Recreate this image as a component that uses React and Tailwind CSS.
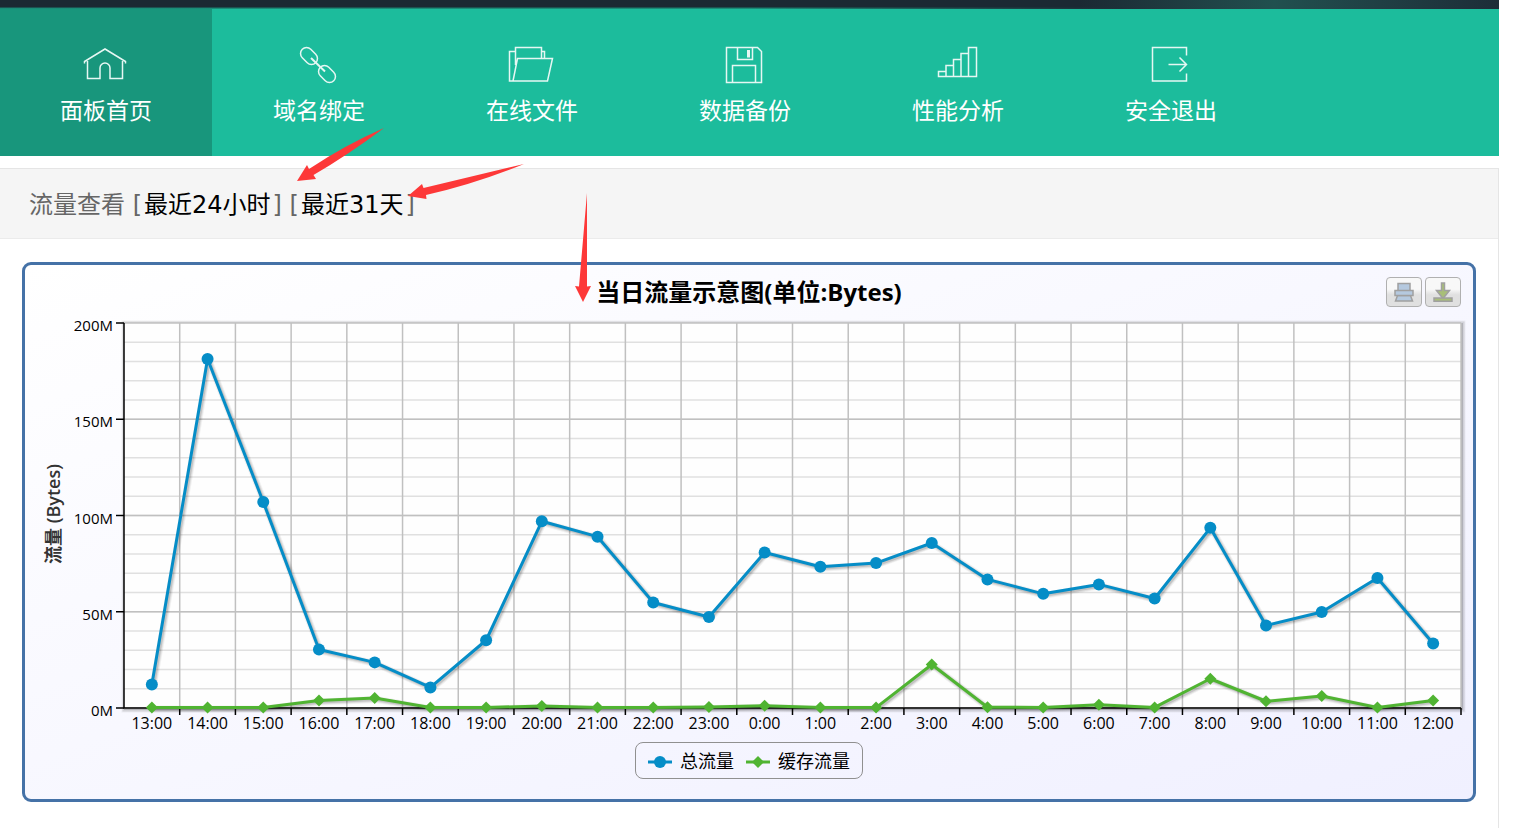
const navItems = [
  { label: '面板首页', icon: HomeIcon, active: true },
  { label: '域名绑定', icon: ChainIcon },
  { label: '在线文件', icon: FolderIcon },
  { label: '数据备份', icon: FloppyIcon },
  { label: '性能分析', icon: BarsIcon },
  { label: '安全退出', icon: ExitIcon },
]

const hours = [
  '13:00', '14:00', '15:00', '16:00', '17:00', '18:00', '19:00', '20:00',
  '21:00', '22:00', '23:00', '0:00', '1:00', '2:00', '3:00', '4:00',
  '5:00', '6:00', '7:00', '8:00', '9:00', '10:00', '11:00', '12:00',
]

const total = [
  12.2, 181.3, 107, 30.4, 23.7, 10.7, 35.2, 97, 89, 54.8, 47.3, 80.8,
  73.4, 75.3, 85.7, 66.8, 59.3, 64.2, 56.9, 93.6, 42.9, 49.9, 67.5, 33.5,
]

const cached = [
  0.3, 0.3, 0.3, 3.9, 5.2, 0.3, 0.3, 1, 0.3, 0.3, 0.5, 1.2,
  0.3, 0.2, 22.6, 0.4, 0.3, 1.7, 0.3, 15.2, 3.5, 6.2, 0.3, 3.9,
]

const plot = { left: 99, right: 1436, top: 8, bottom: 393, max: 200 }
const step = (plot.right - plot.left) / hours.length

const xAt = (i) => plot.left + step * (i + 0.5)
const yAt = (value) => plot.bottom - (value / plot.max) * (plot.bottom - plot.top)
const toPoints = (series) => series.map((v, i) => `${xAt(i)},${yAt(v)}`).join(' ')

function NavIcon({ children }) {
  return (
    <svg viewBox="0 0 48 40" className="w-12 h-10" fill="none" stroke="#e6f7f3" strokeWidth="1.5" aria-hidden="true">
      {children}
    </svg>
  )
}

function HomeIcon() {
  return (
    <NavIcon>
      <path d="M2.5 18.5v-2L23 4l20.5 12.5v2M5.5 16v17.5H18V23a5 5 0 0 1 10 0v10.500h12.500V16" />
    </NavIcon>
  )
}

function ChainIcon() {
  return (
    <NavIcon>
      <rect x="4.500" y="5" width="19" height="12" rx="6" transform="rotate(45 14 11)" />
      <rect x="22.500" y="23" width="19" height="12" rx="6" transform="rotate(45 32 29)" />
      <path d="M16 13l14 13.500" strokeWidth="2" />
    </NavIcon>
  )
}

function FolderIcon() {
  return (
    <NavIcon>
      <path d="M7.500 6.500h-6V36h38l5-22.500h-35L5 36M7.500 20V2.500h26v11M33.500 6.500h3v7" />
    </NavIcon>
  )
}

function FloppyIcon() {
  return (
    <NavIcon>
      <path d="M5.500 2.500h31l4 4v31h-35zM16.500 2.500v12h15v-12M11.500 37.500v-17h23v17" />
      <rect x="26" y="5" width="3" height="7.500" fill="#e6f7f3" stroke="none" />
    </NavIcon>
  )
}

function BarsIcon() {
  return (
    <NavIcon>
      <path d="M4.500 31.500v-5H12v-6h7.500v-6H27v-6h7.500v-6h8v29zM12 26.500v5M19.500 20.500v11M27 14.500v17M34.500 8.500v23" />
    </NavIcon>
  )
}

function ExitIcon() {
  return (
    <NavIcon>
      <path d="M39.500 10.500v-8h-34V36h34v-7.500M21.500 19.500h18M32.500 12.500l7 7-7 7" />
    </NavIcon>
  )
}

function Navbar() {
  return (
    <nav className="flex flex-wrap gap-px bg-[#1cbc9c]">
      {navItems.map(({ label, icon: Icon, active }) => (
        <a
          key={label}
          href="#"
          className={
            active
              ? 'flex flex-col items-center w-[212px] h-[147px] pt-9 bg-[#18967c]'
              : 'flex flex-col items-center w-[212px] h-[147px] pt-9 hover:bg-[#18967c]'
          }
        >
          <Icon />
          <span className="mt-2.5 text-[23px] leading-[30px] text-white">{label}</span>
        </a>
      ))}
    </nav>
  )
}

// Translucent strokes stacked under a line, wide to narrow
function SeriesLine({ points, color }) {
  return (
    <g fill="none" strokeLinejoin="round">
      <g stroke="#000" transform="translate(1.5 1.5)">
        <polyline points={points} strokeWidth="7" strokeOpacity="0.05" />
        <polyline points={points} strokeWidth="5" strokeOpacity="0.08" />
        <polyline points={points} strokeWidth="3" strokeOpacity="0.12" />
      </g>
      <polyline points={points} stroke={color} strokeWidth="3" />
    </g>
  )
}

function Diamond({ x, y }) {
  return <path d={`M${x} ${y - 6}l6 6-6 6-6-6z`} fill="#50b432" />
}

function TrafficChart() {
  const width = plot.right - plot.left
  const height = plot.bottom - plot.top
  const minor = Array.from({ length: 20 }, (_, i) => i * 10)
  const major = [0, 50, 100, 150, 200]

  return (
    <svg viewBox="0 0 1448 420" className="block w-full h-auto" role="img" aria-label="当日流量示意图">
      <g fill="none" stroke="#000">
        <rect x={plot.left + 1} y={plot.top + 1} width={width} height={height} strokeWidth="7" strokeOpacity="0.05" />
        <rect x={plot.left + 1} y={plot.top + 1} width={width} height={height} strokeWidth="5" strokeOpacity="0.1" />
        <rect x={plot.left + 1} y={plot.top + 1} width={width} height={height} strokeWidth="2" strokeOpacity="0.15" />
      </g>
      <rect x={plot.left} y={plot.top} width={width} height={height} fill="#fefefe" />

      <g strokeWidth="1.5">
        {minor.map((v) => (
          <line key={v} x1={plot.left} x2={plot.right} y1={yAt(v)} y2={yAt(v)} stroke="#e0e0e0" />
        ))}
        {hours.map((h, i) => (
          <line key={h} x1={plot.left + step * (i + 1)} x2={plot.left + step * (i + 1)} y1={plot.top} y2={plot.bottom} stroke="#c0c0c0" />
        ))}
        {major.map((v) => (
          <line key={v} x1={plot.left} x2={plot.right} y1={yAt(v)} y2={yAt(v)} stroke="#c0c0c0" />
        ))}
        {major.map((v) => (
          <line key={v} x1={plot.left - 8} x2={plot.left} y1={yAt(v)} y2={yAt(v)} stroke="#000" />
        ))}
        {hours.map((h, i) => (
          <line key={h} x1={plot.left + step * (i + 1)} x2={plot.left + step * (i + 1)} y1={plot.bottom} y2={plot.bottom + 7} stroke="#000" />
        ))}
        <path d={`M${plot.left} ${plot.top}V${plot.bottom}H${plot.right}`} fill="none" stroke="#000" />
      </g>

      <g className="text-[15px]" textAnchor="end">
        {major.map((v) => (
          <text key={v} x={plot.left - 11} y={yAt(v) + 8}>{v}M</text>
        ))}
      </g>
      <g className="text-[16px]" textAnchor="middle">
        {hours.map((h, i) => (
          <text key={h} x={xAt(i)} y="414">{h}</text>
        ))}
      </g>
      <text x="-199" y="35" transform="rotate(-90)" textAnchor="middle" fill="#333" className="text-[18px] font-semibold">
        流量 (Bytes)
      </text>

      <SeriesLine points={toPoints(total)} color="#058dc7" />
      {total.map((v, i) => (
        <circle key={i} cx={xAt(i)} cy={yAt(v)} r="6" fill="#058dc7" />
      ))}
      <SeriesLine points={toPoints(cached)} color="#50b432" />
      {cached.map((v, i) => (
        <Diamond key={i} x={xAt(i)} y={yAt(v)} />
      ))}
    </svg>
  )
}

function ToolButton({ label, children }) {
  return (
    <button
      type="button"
      aria-label={label}
      className="flex items-center justify-center w-9 h-[30px] rounded border border-[#b0b0b0] bg-linear-to-b from-[#f8f8f8] from-40% to-[#e0e0e0] to-60% cursor-pointer"
    >
      <svg viewBox="0 0 20 20" className="w-5 h-5" stroke="#a0a0a0" strokeWidth="1.5" aria-hidden="true">
        {children}
      </svg>
    </button>
  )
}

function ChartCard() {
  return (
    <section className="rounded-[9px] border-3 border-[#4572a7] bg-linear-to-br from-white to-[#f0f0ff] pb-5">
      <div className="grid grid-cols-[1fr_auto_1fr] items-center h-[50px] px-3 pt-1">
        <h2 className="col-start-2 text-[24px] leading-[30px] font-bold text-black">当日流量示意图(单位:Bytes)</h2>
        <div className="flex justify-end gap-[3px]">
          <ToolButton label="打印">
            <g fill="#b5c9df">
              <path d="M4 1.5h12v8H4z" />
              <path d="M3.5 13.5h13L18.5 19h-17z" />
              <path d="M1 8.500h18v5H1z" />
            </g>
          </ToolButton>
          <ToolButton label="下载">
            <g fill="#a8bf77">
              <path d="M8.500 1v7.500h-5l6.500 8 6.500-8h-5V1z" />
              <path d="M1 16h18v3.250H1z" />
            </g>
          </ToolButton>
        </div>
      </div>

      <TrafficChart />

      <ul className="flex items-center gap-3 w-fit mx-auto mt-[7px] h-[37px] px-3 pt-0.5 rounded-lg border border-[#909090] text-[18px] text-black">
        <li className="flex items-center gap-2">
          <svg viewBox="0 0 24 14" className="w-6 h-3.5" aria-hidden="true">
            <path d="M0 7h24" stroke="#058dc7" strokeWidth="3" />
            <circle cx="12" cy="7" r="6" fill="#058dc7" />
          </svg>
          总流量
        </li>
        <li className="flex items-center gap-2">
          <svg viewBox="0 0 24 14" className="w-6 h-3.5" aria-hidden="true">
            <path d="M0 7h24" stroke="#50b432" strokeWidth="3" />
            <Diamond x={12} y={7} />
          </svg>
          缓存流量
        </li>
      </ul>
    </section>
  )
}

function Arrows() {
  return (
    <svg viewBox="0 0 600 310" className="absolute top-0 left-0 w-[600px] h-[310px] pointer-events-none" fill="#fd3838" aria-hidden="true">
      <path d="M297 181L307 165L309 169Q345 145 384 128Q348 155 313.5 175L316 179Z" />
      <path d="M408 196L422 184L423.5 188L524 164Q475 184 426 195L426.5 199Z" />
      <path d="M583 302L575 286L579 286.5L587 193L587 286.5L591 286Z" />
    </svg>
  )
}

export default function App() {
  return (
    <div className="relative flex flex-col min-h-screen pr-[39px] bg-white font-['Open_Sans','Noto_Sans_CJK_SC',sans-serif]">
      <header>
        <div className="grid h-[9px] bg-linear-to-r from-[#1b2933] from-72% via-[#21504f] via-85% to-[#1d2d38]">
          <div className="bg-linear-to-b from-transparent from-75% to-[#1aa88c] mask-r-from-50% mask-r-to-75%" />
        </div>
        <Navbar />
      </header>

      <main className="flex-1 mt-3 border-t border-r border-[#e5e5e5]">
        <h1 className="flex items-center h-[70px] px-[29px] pt-0.5 border-b border-[#ebebeb] bg-[#f5f5f5] text-[24px] text-[#666] font-['DejaVu_Sans','Noto_Sans_CJK_SC',sans-serif]">
          <span>
            流量查看 [<a href="#" className="px-0.5 text-black">最近24小时</a>] [<a href="#" className="px-0.5 text-black">最近31天</a>]
          </span>
        </h1>
        <div className="px-[22px] pt-[23px] pb-6">
          <ChartCard />
        </div>
      </main>

      <Arrows />
    </div>
  )
}
